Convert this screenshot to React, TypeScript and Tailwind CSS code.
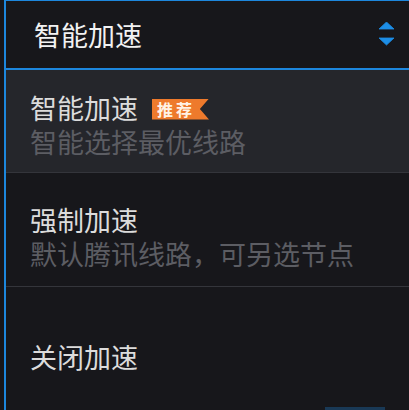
import React from "react";

const font = { fontFamily: '"Noto Sans CJK SC", "Noto Sans", sans-serif' };

export default function App() {
  return (
    <div className="w-[409px] h-[410px] bg-[#17171b] overflow-hidden relative" style={font}>
      <div className="ml-[4px] h-full border-l-[2px] border-t-[1px] border-[#1d87dd] flex flex-col">
        <div className="h-[69px] border-b-[2px] border-[#1d87dd] flex items-start justify-between pl-[28px] pr-[15px] pt-[17px] bg-[#17171b]">
          <span className="text-[27px] leading-[34px] text-[#f2f2f2]">智能加速</span>
          <svg width="15" height="24" viewBox="0 0 15 24" className="mt-[4px]">
            <polygon points="7.5,0 15,7 0,7" fill="#1d8ee6" strokeLinejoin="round" stroke="#1d8ee6" strokeWidth="0.8" />
            <polygon points="0,16 15,16 7.5,23" fill="#1d8ee6" strokeLinejoin="round" stroke="#1d8ee6" strokeWidth="0.8" />
          </svg>
        </div>
        <div className="h-[103px] bg-[#25262b] pl-[24px] pt-[21px] border-b-[1px] border-[#34353b]">
          <div className="flex items-center gap-[14px]">
            <span className="text-[27px] leading-[34px] text-[#dcdcdc]">智能加速</span>
            <span className="w-[57px] h-[21px] bg-[#ee7a2c] text-[16px] font-bold leading-[21px] text-[#fff3e6] pl-[5px] mt-[2px] tracking-[3px] [clip-path:polygon(0_0,100%_0,84%_50%,100%_100%,0_100%)]">
              推荐
            </span>
          </div>
          <div className="text-[27px] leading-[34px] text-[#5c5d63]">智能选择最优线路</div>
        </div>
        <div className="h-[114px] pl-[24px] pt-[30px] border-b-[1px] border-[#34353b]">
          <div className="text-[27px] leading-[34px] text-[#dcdcdc]">强制加速</div>
          <div className="text-[27px] leading-[34px] text-[#5c5d63]">默认腾讯线路，可另选节点</div>
        </div>
        <div className="flex-1 pl-[24px] pt-[53px]">
          <div className="text-[27px] leading-[34px] text-[#dcdcdc]">关闭加速</div>
        </div>
      </div>
      <div className="absolute left-[325px] bottom-0 w-[60px] h-[3px] bg-[#1d6fb0] opacity-40" />
    </div>
  );
}
